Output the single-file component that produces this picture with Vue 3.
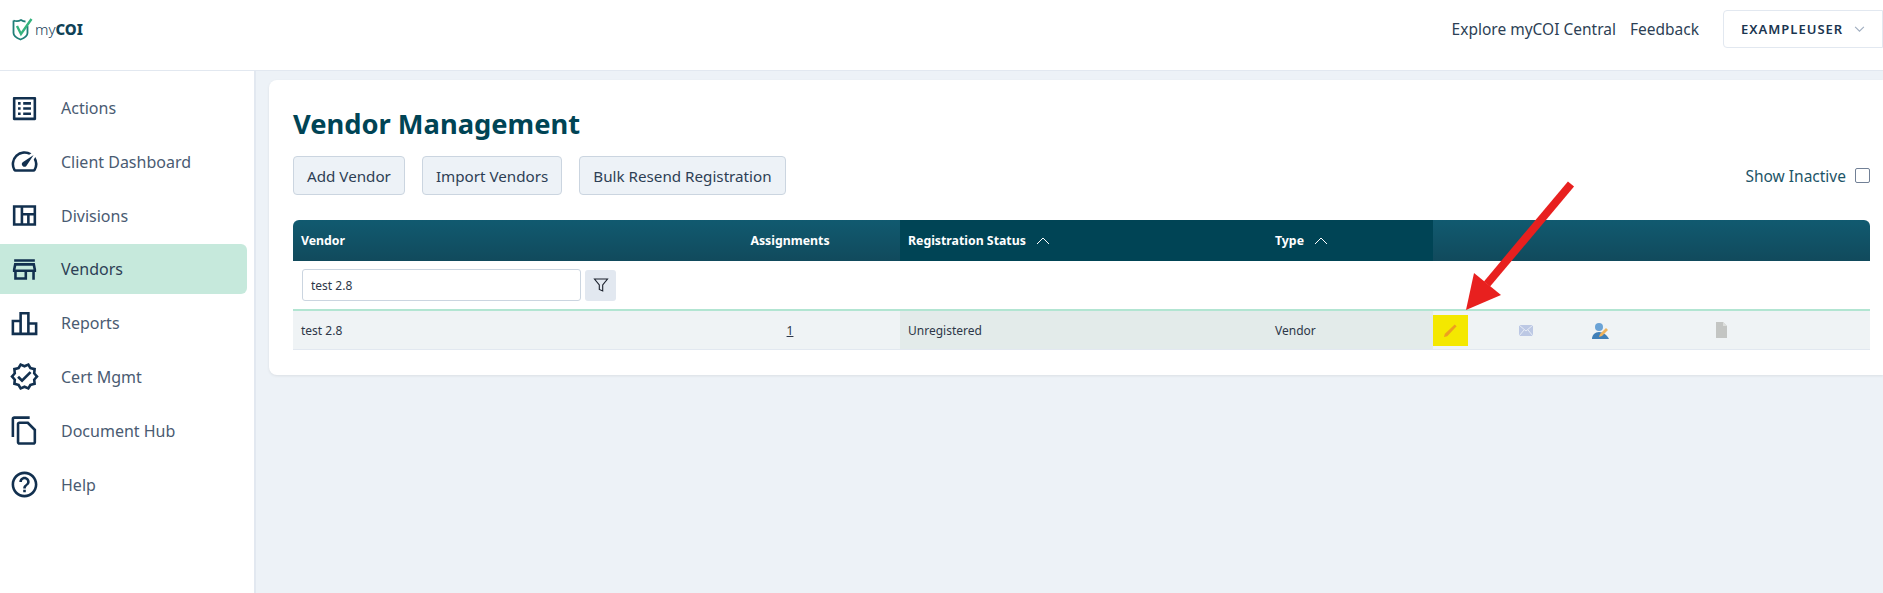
<template>
  <div class="page">
    <header class="topbar">
      <a class="logo">
        <svg class="logo-mark" viewBox="0 0 22 24" width="22" height="24">
          <path d="M1.500 3.500c2.500 1 5 1 7.500-.5 1.500 1 3 1.500 4.500 1.500M15.500 9v7c0 3-3 5-7 6.500-4-1.500-7-3.500-7-6.500V3.500" fill="none" stroke="#1f7f78" stroke-width="1.800" />
          <path d="M5 9l4 8L19.500 2" fill="none" stroke="#35b37e" stroke-width="2.400" />
        </svg>
        <span class="logo-my">my</span><span class="logo-coi">COI</span>
      </a>
      <nav class="topnav">
        <a>Explore myCOI Central</a>
        <a>Feedback</a>
        <button class="user-btn">
          <span>EXAMPLEUSER</span>
          <svg viewBox="0 0 12 8" width="11" height="7"><path d="M1 1l5 5 5-5" fill="none" stroke="#a0aec0" stroke-width="1.300" /></svg>
        </button>
      </nav>
    </header>

    <div class="body">
      <aside class="sidebar">
        <a v-for="item in menu" :key="item.label" class="menu-item" :class="{ active: item.active }">
          <svg viewBox="0 0 24 24" width="31" height="31"><path :d="item.icon" fill="#12304f" /></svg>
          <span>{{ item.label }}</span>
        </a>
      </aside>

      <main class="main">
        <section class="card">
          <h1>Vendor Management</h1>
          <div class="toolbar">
            <button class="btn">Add Vendor</button>
            <button class="btn">Import Vendors</button>
            <button class="btn">Bulk Resend Registration</button>
            <label class="show-inactive">Show Inactive <span class="checkbox"></span></label>
          </div>

          <div class="table">
            <div class="th">Vendor</div>
            <div class="th center">Assignments</div>
            <div class="th sorted">Registration Status <svg viewBox="0 0 14 8" width="14" height="8"><path d="M1 7l6-6 6 6" fill="none" stroke="#fff" /></svg></div>
            <div class="th sorted">Type <svg viewBox="0 0 14 8" width="14" height="8"><path d="M1 7l6-6 6 6" fill="none" stroke="#fff" /></svg></div>
            <div class="th"></div>

            <div class="filter-row">
              <input class="filter-input" value="test 2.8" />
              <button class="filter-btn">
                <svg viewBox="0 0 16 16" width="16" height="16"><path d="M1.500 2h13L9.700 8v6L6.300 12.500V8z" fill="none" stroke="#1a202c" stroke-width="1.100" /></svg>
              </button>
            </div>

            <div class="td first">test 2.8</div>
            <div class="td first center"><u>1</u></div>
            <div class="td first sorted-cell">Unregistered</div>
            <div class="td first sorted-cell">Vendor</div>
            <div class="td first actions">
              <span class="highlight">
                <svg viewBox="0 0 16 16" width="15" height="15"><path d="M1 15l1-3.500L12.500 1.500l2 2L4.500 14z" fill="#eda01f" /></svg>
              </span>
              <svg class="act-mail" viewBox="0 0 14 11" width="14" height="11">
                <rect width="14" height="11" fill="#bcc8e4" />
                <path d="M0 0l7 6 7-6M0 11l5-6M14 11L9 5" fill="none" stroke="#e8edf6" />
              </svg>
              <svg class="act-person" viewBox="0 0 17 17" width="17" height="17">
                <circle cx="7" cy="5" r="4" fill="#6ba3d6" />
                <path d="M0 17c0-4 3-7 7-7s8 3 10 7z" fill="#3f7fb8" />
                <path d="M8 12l6-6 2 2-6 6-3 1z" fill="#eeb25c" />
              </svg>
              <svg class="act-doc" viewBox="0 0 11 16" width="11" height="16"><path d="M0 0h7l4 4v12H0z" fill="#c3c5c3" /><path d="M7 0l4 4H7z" fill="#dcdedc" /></svg>
            </div>
          </div>
        </section>
      </main>
    </div>

    <svg class="arrow" viewBox="0 0 120 140" width="120" height="140">
      <path d="M111 4L27 104" stroke="#e8201f" stroke-width="8" />
      <path d="M6 130L14 93 41 115z" fill="#e8201f" />
    </svg>
  </div>
</template>

<script setup>
const menu = [
  { label: 'Actions', icon: 'M19 5v14H5V5h14m1.100-2H3.900c-.5 0-.9.4-.9.9v16.200c0 .4.4.9.9.9h16.200c.4 0 .9-.5.9-.9V3.900c0-.5-.5-.9-.9-.9zM11 7h6v2h-6V7zm0 4h6v2h-6v-2zm0 4h6v2h-6zM7 7h2v2H7zm0 4h2v2H7zm0 4h2v2H7z' },
  { label: 'Client Dashboard', icon: 'M20.380 8.570l-1.230 1.850a8 8 0 0 1-.22 7.580H5.070A8 8 0 0 1 15.580 6.850l1.850-1.230A10 10 0 0 0 3.350 19a2 2 0 0 0 1.720 1h13.850a2 2 0 0 0 1.740-1 10 10 0 0 0-.27-10.440zm-9.790 6.840a2 2 0 0 0 2.830 0l5.660-8.490-8.490 5.660a2 2 0 0 0 0 2.830z' },
  { label: 'Divisions', icon: 'M3 4h18v16H3zm2 2v12h4V6zm6 0v4h8V6zm0 6v6h3v-6zm5 0v6h3v-6z' },
  { label: 'Vendors', active: true, icon: 'M4 4h16v2H4zm16 3H4l-1 5v2h1v6h10v-6h4v6h2v-6h1v-2l-1-5zm-8 11H6v-4h6v4zm-6.960-6 .6-3h12.720l.6 3H5.040z' },
  { label: 'Reports', icon: 'M16 11V3H8v6H2v12h20V11H16zM10 5h4v14h-4V5zM4 11h4v8H4V11zM20 19h-4v-6h4V19z' },
  { label: 'Cert Mgmt', icon: 'M23 11.990l-2.440-2.790.34-3.690-3.610-.82L15.400 1.500 12 2.960 8.600 1.500 6.710 4.690 3.100 5.500l.34 3.700L1 11.990l2.440 2.790-.34 3.700 3.610.82 1.890 3.200 3.400-1.470 3.400 1.460 1.890-3.190 3.610-.82-.34-3.690L23 11.990zm-3.950 1.480l-.56.65.08.85.18 1.950-1.900.43-.84.19-.44.74-.99 1.680-1.780-.77-.8-.34-.79.34-1.780.77-.99-1.670-.44-.74-.84-.19-1.900-.43.18-1.960.08-.85-.56-.65-1.290-1.470 1.290-1.480.56-.65-.09-.86-.18-1.940 1.900-.43.84-.19.44-.74.99-1.680 1.780.77.8.34.79-.34 1.780-.77.99 1.680.44.74.84.19 1.900.43-.18 1.950-.08.85.56.65 1.290 1.470-1.280 1.480zM10.090 13.750 7.770 11.420 6.290 12.910 10.090 16.720 17.430 9.360 15.950 7.870z' },
  { label: 'Document Hub', icon: 'M16 1H4c-1.100 0-2 .9-2 2v14h2V3h12V1zm-1 4H8c-1.100 0-1.990.9-1.990 2L6 21c0 1.100.89 2 1.990 2H19c1.100 0 2-.9 2-2V11l-6-6zM8 21V7h6v5h5v9H8zM14 7l5 5h-5z' },
  { label: 'Help', icon: 'M11 18h2v-2h-2v2zm1-16C6.480 2 2 6.480 2 12s4.480 10 10 10 10-4.480 10-10S17.520 2 12 2zm0 18c-4.410 0-8-3.590-8-8s3.590-8 8-8 8 3.590 8 8-3.590 8-8 8zm0-14c-2.210 0-4 1.790-4 4h2c0-1.100.9-2 2-2s2 .9 2 2c0 2-3 1.750-3 5h2c0-2.250 3-2.500 3-5 0-2.210-1.790-4-4-4z' }
]
</script>

<style>
html, body {
  margin: 0;
  overflow: hidden;
}
</style>

<style scoped>
.page {
  position: relative;
  display: flex;
  flex-direction: column;
  height: 100vh;
  overflow: hidden;
  font-family: "Noto Sans", "Open Sans", sans-serif;
  color: #2d3f55;
  background: #edf2f7;
}

.topbar {
  display: flex;
  flex: none;
  align-items: center;
  justify-content: space-between;
  box-sizing: border-box;
  height: 71px;
  padding: 0 0 12px 12px;
  background: #fff;
  border-bottom: 1px solid #e2e8f0;
}

.logo {
  display: flex;
  align-items: center;
  font-size: 15px;
  color: #14405a;
}

.logo-mark {
  margin-right: 1px;
}

.logo-my {
  font-weight: 300;
}

.logo-coi {
  font-weight: 800;
  color: #0f4257;
}

.topnav {
  display: flex;
  align-items: center;
  font-size: 15.500px;
}

.topnav a:first-child {
  margin-right: 14px;
}

.user-btn {
  display: flex;
  align-items: center;
  justify-content: space-between;
  box-sizing: border-box;
  width: 160px;
  height: 38px;
  margin-left: 24px;
  padding: 0 17px;
  font: 600 13px "Noto Sans", sans-serif;
  letter-spacing: 1px;
  color: #1a3550;
  background: #fff;
  border: 1px solid #e2e8f0;
  border-radius: 4px 0 0 4px;
}

.body {
  display: flex;
  flex: 1;
  min-height: 0;
}

.sidebar {
  flex: none;
  box-sizing: border-box;
  width: 256px;
  padding-top: 12px;
  background: #fff;
  border-right: 2px solid #e2e8f0;
}

.menu-item {
  display: flex;
  align-items: center;
  gap: 21px;
  box-sizing: border-box;
  width: 247px;
  height: 50px;
  margin-bottom: 3.800px;
  padding-left: 9px;
  font-size: 16px;
  color: #4a5b72;
  border-radius: 0 6px 6px 0;
}

.menu-item.active {
  background: #c6e9dc;
  color: #2d3f55;
}

.main {
  flex: 1;
  min-width: 0;
  padding: 9px 0 0 13px;
}

.card {
  box-sizing: border-box;
  height: 295px;
  padding: 26px 13px 0 24px;
  background: #fff;
  border-radius: 8px 0 0 8px;
  box-shadow: 0 1px 3px rgba(0, 0, 0, .08);
}

h1 {
  margin: 0;
  font-size: 27.300px;
  line-height: 36px;
  font-weight: 700;
  color: #004455;
}

.toolbar {
  display: flex;
  align-items: center;
  gap: 17px;
  margin-top: 14px;
}

.btn {
  height: 39px;
  padding: 0 13px;
  font: 15.200px "Noto Sans", sans-serif;
  color: #2d3f55;
  background: #edf2f7;
  border: 1px solid #cbd5e0;
  border-radius: 4px;
}

.show-inactive {
  display: flex;
  align-items: center;
  gap: 9px;
  margin-left: auto;
  font-size: 15.500px;
  color: #1d5568;
}

.checkbox {
  display: block;
  box-sizing: border-box;
  width: 15px;
  height: 15px;
  border: 1px solid #718096;
  border-radius: 2px;
}

.table {
  display: grid;
  grid-template-columns: 387px 220px 367px 166px 1fr;
  margin-top: 25px;
  font-size: 12px;
}

.th {
  display: flex;
  align-items: center;
  gap: 10px;
  height: 41px;
  padding-left: 8px;
  font-size: 12.300px;
  font-weight: 700;
  color: #fff;
  background: linear-gradient(#115a70, #114a5c);
}

.th:first-child {
  border-radius: 6px 0 0 0;
}

.th:nth-child(5) {
  border-radius: 0 6px 0 0;
}

.th.center {
  justify-content: center;
  padding-left: 0;
}

.th.sorted {
  background: #004455;
}

.filter-row {
  display: flex;
  grid-column: 1 / -1;
  gap: 4px;
  align-items: center;
  height: 48px;
  padding-left: 9px;
}

.filter-input {
  box-sizing: border-box;
  width: 279px;
  height: 32px;
  padding: 0 8px;
  font: 12px "Noto Sans", sans-serif;
  color: #2d3748;
  border: 1px solid #cbd5e0;
  border-radius: 3px;
  outline: none;
}

.filter-btn {
  display: flex;
  align-items: center;
  justify-content: center;
  width: 31px;
  height: 31px;
  padding: 0;
  background: #e2e8f0;
  border: 0;
  border-radius: 3px;
}

.td {
  display: flex;
  align-items: center;
  box-sizing: border-box;
  height: 41px;
  padding-left: 8px;
  color: #2d3748;
  background: #eff3f5;
  border-top: 2px solid #b2e5d2;
  border-bottom: 1px solid #e2e8f0;
}

.td.center {
  justify-content: center;
  padding-left: 0;
}

.td.sorted-cell {
  background: #e3ebea;
}

.td.actions {
  padding-left: 0;
}

.highlight {
  display: flex;
  align-items: center;
  justify-content: center;
  width: 35px;
  height: 31px;
  background: #f4e800;
}

.act-mail {
  margin-left: 51px;
}

.act-person {
  margin-left: 59px;
}

.act-doc {
  margin-left: 107px;
}

.arrow {
  position: absolute;
  top: 180px;
  left: 1460px;
}
</style>
